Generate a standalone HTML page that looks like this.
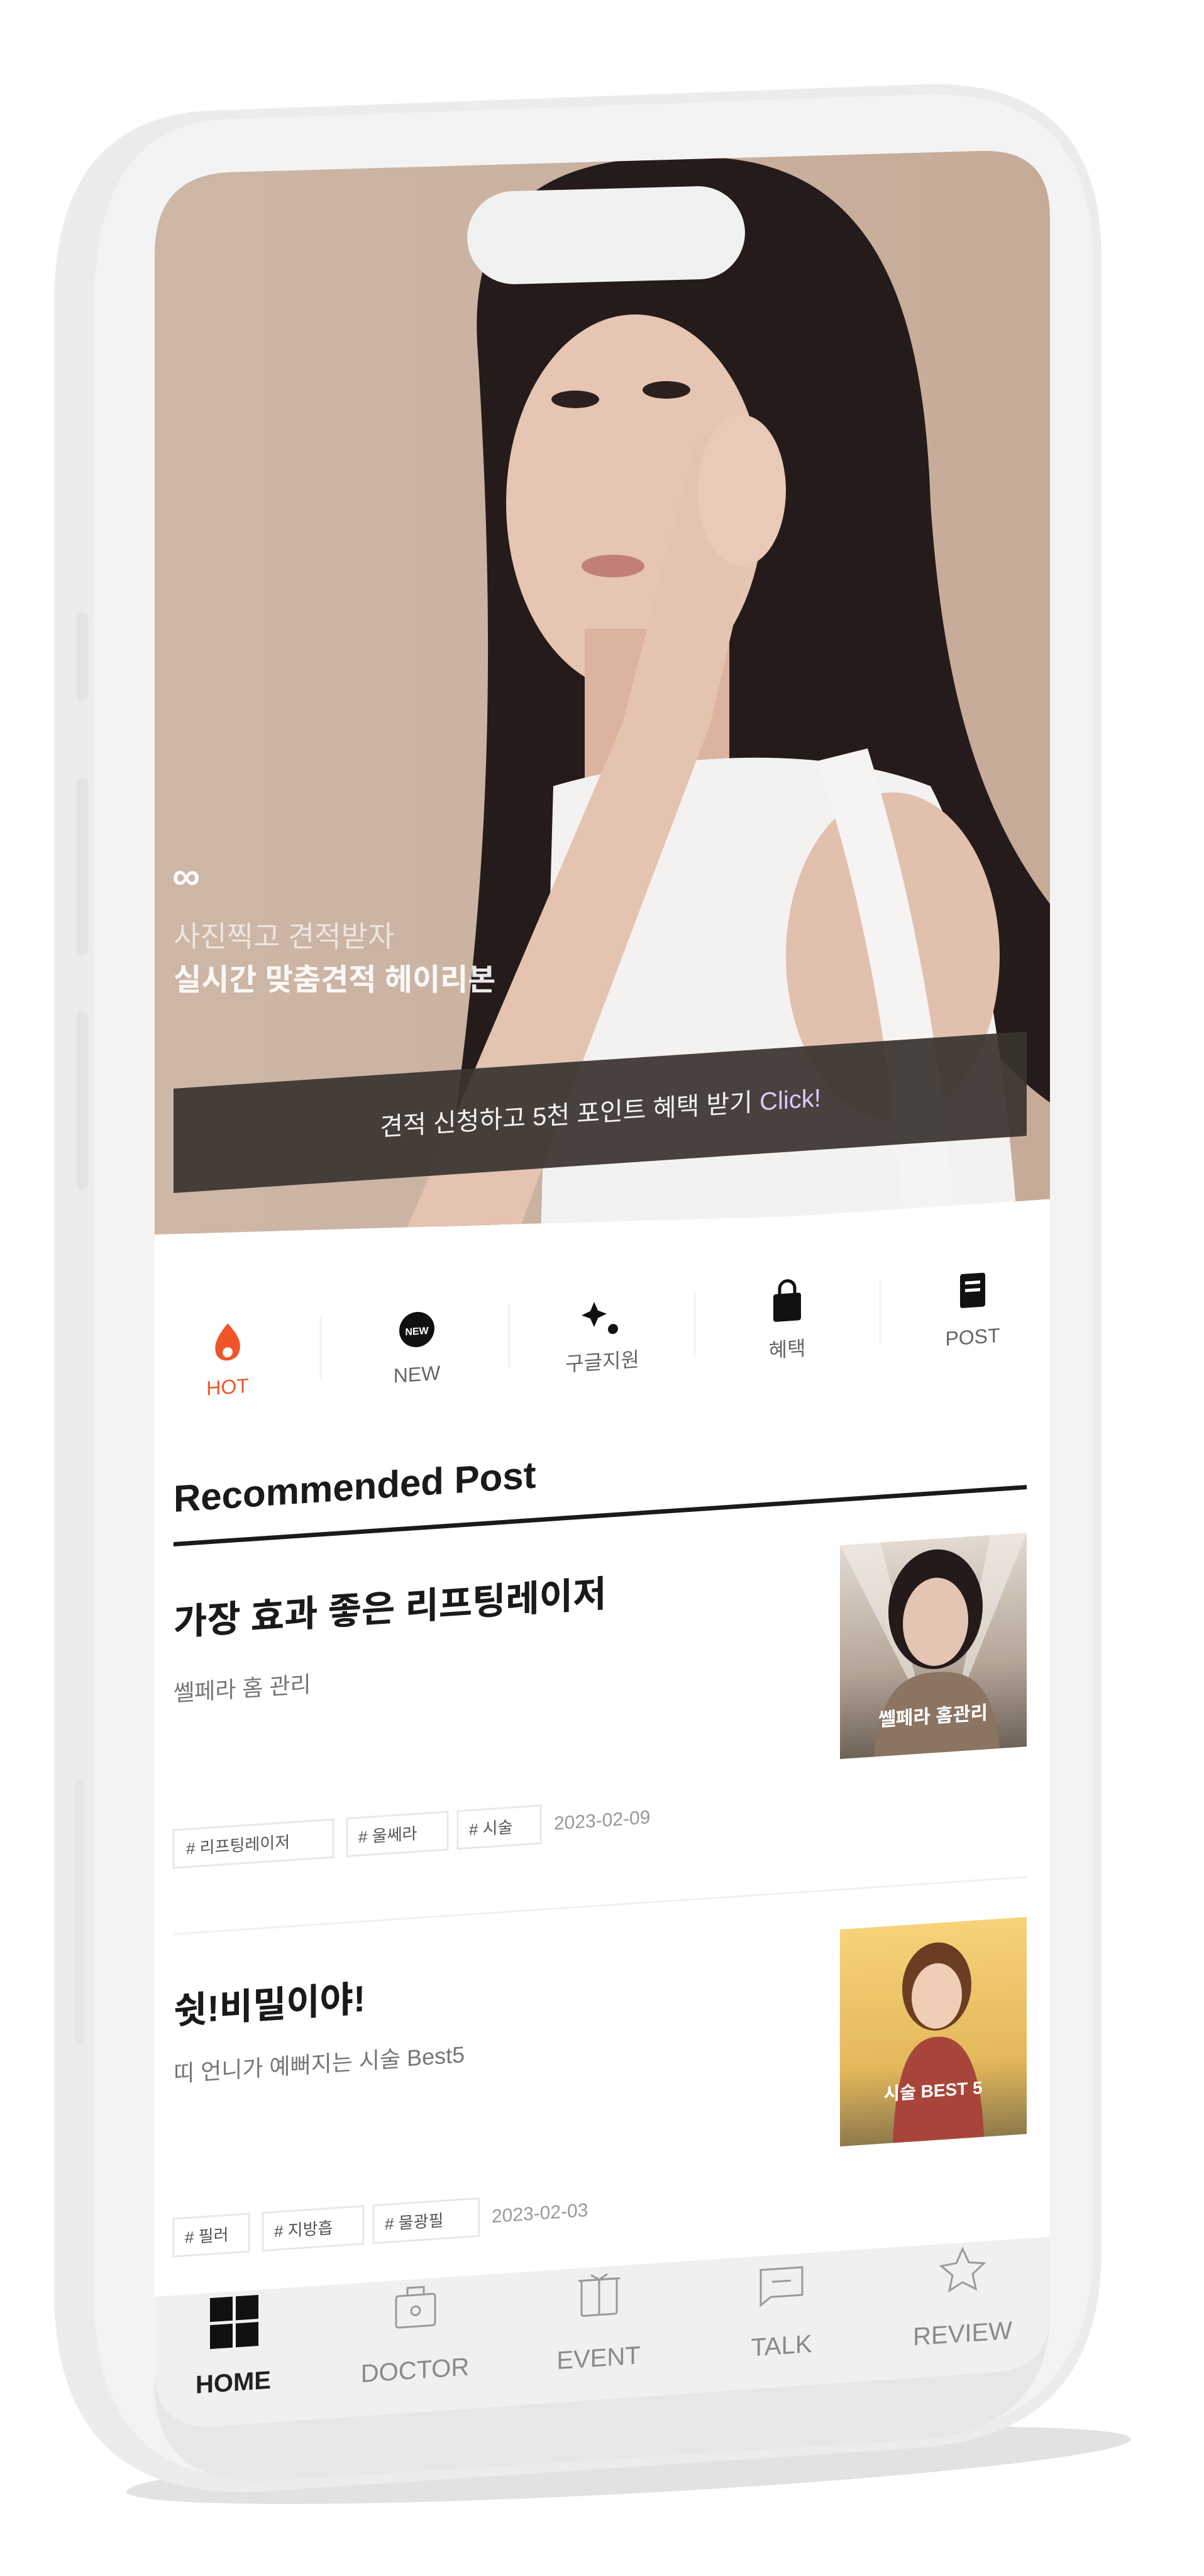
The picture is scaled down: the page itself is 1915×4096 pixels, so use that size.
<!DOCTYPE html>
<html><head><meta charset="utf-8">
<style>
html,body{margin:0;padding:0;background:#fff;}
svg{display:block;}
text{font-family:"Liberation Sans","Noto Sans CJK KR",sans-serif;}
</style></head>
<body>
<svg width="1915" height="4096" viewBox="0 0 1915 4096" xmlns="http://www.w3.org/2000/svg">
<defs>
  <clipPath id="scr">
    <path d="M246 400 Q248 282 360 274 L1560 240 Q1670 236 1670 345 L1670 3680 Q1668 3768 1580 3772 L340 3858 Q248 3862 246 3770 Z"/>
  </clipPath>
  <clipPath id="hero">
    <polygon points="246,150 1700,150 1700,1921 246,1963"/>
  </clipPath>
  <linearGradient id="bg" x1="0" y1="0" x2="1" y2="0">
    <stop offset="0" stop-color="#cdb7a7"/><stop offset="1" stop-color="#c6ab98"/>
  </linearGradient>
  <linearGradient id="t1" x1="0" y1="0" x2="0" y2="1">
    <stop offset="0" stop-color="#e3dad2"/><stop offset="0.6" stop-color="#b4a597"/><stop offset="1" stop-color="#6e6257"/>
  </linearGradient>
  <linearGradient id="t2" x1="0" y1="0" x2="0" y2="1">
    <stop offset="0" stop-color="#f7d27a"/><stop offset="0.65" stop-color="#e3b85a"/><stop offset="1" stop-color="#8f7a4c"/>
  </linearGradient>
</defs>

<ellipse cx="1000" cy="3920" rx="800" ry="45" fill="#e2e2e2" transform="rotate(-3 1000 3920)"/>
<path d="M330 176 L1470 134 Q1752 126 1752 410 L1752 3590 Q1745 3878 1450 3893 L410 3962 Q90 3975 86 3650 L86 480 Q88 190 330 176 Z" fill="#ececec"/>
<path d="M350 190 L1470 150 Q1738 144 1738 410 L1738 3590 Q1730 3860 1450 3875 L420 3940 Q150 3950 150 3650 L150 480 Q152 204 350 190 Z" fill="#f3f3f3"/>
<path d="M246 3600 L1670 3560 L1670 3690 Q1660 3870 1450 3880 L420 3945 Q240 3950 246 3780 Z" fill="#e7e7e7"/>
<rect x="122" y="974" width="18" height="140" rx="8" fill="#e3e3e3"/>
<rect x="122" y="1237" width="18" height="282" rx="8" fill="#e3e3e3"/>
<rect x="122" y="1609" width="18" height="282" rx="8" fill="#e3e3e3"/>
<rect x="118" y="2830" width="16" height="420" rx="8" fill="#e6e6e6"/>

<g clip-path="url(#scr)">
  <rect x="240" y="200" width="1440" height="3700" fill="#fff"/>
  <g clip-path="url(#hero)">
    <rect x="240" y="200" width="1440" height="1800" fill="url(#bg)"/>
    <path d="M760 560 C740 300 900 240 1130 250 C1400 262 1470 500 1480 800 C1500 1100 1560 1300 1680 1450 L1680 1760 C1560 1680 1460 1520 1420 1400 L1000 1400 C900 1520 850 1700 790 1960 L700 1960 C760 1520 800 1200 760 560 Z" fill="#251b1a"/>
    <ellipse cx="1010" cy="800" rx="205" ry="300" fill="#e6c5b3"/>
    <rect x="930" y="1000" width="230" height="260" fill="#dcb39e"/>
    <path d="M880 1250 C1050 1200 1300 1180 1480 1250 C1560 1400 1600 1700 1620 1970 L860 1970 Z" fill="#f4f2f1"/>
    <ellipse cx="1420" cy="1520" rx="170" ry="260" fill="#e2c0ae"/>
    <path d="M1300 1210 L1380 1190 C1460 1450 1500 1700 1520 1970 L1440 1970 C1420 1700 1380 1450 1300 1210 Z" fill="#f6f4f3"/>
    <polygon points="640,1970 820,1970 1130,1150 1230,720 1110,690 990,1150" fill="#e5c3b1"/>
    <ellipse cx="1180" cy="780" rx="70" ry="120" fill="#e9cab8"/>
    <ellipse cx="915" cy="635" rx="38" ry="14" fill="#2b201e"/>
    <ellipse cx="1060" cy="620" rx="38" ry="14" fill="#2b201e"/>
    <ellipse cx="975" cy="900" rx="50" ry="18" fill="#c07f78"/>
    <text x="274" y="1414" font-size="62" font-weight="700" fill="#fff">∞</text>
    <text x="276" y="1505" font-size="46" fill="#fff" fill-opacity="0.65">사진찍고 견적받자</text>
    <text x="276" y="1574" font-size="48" font-weight="700" fill="#fff" fill-opacity="0.9">실시간 맞춤견적 <tspan fill="#fff">헤이리본</tspan></text>
  </g>

  <g transform="matrix(1,-0.067,0,1,0,18.5)">
    <rect x="276" y="1731" width="1357" height="166" fill="#3a342f" fill-opacity="0.93"/>
    <text x="955" y="1828" font-size="40" fill="#f2f2f2" text-anchor="middle">견적 신청하고 5천 포인트 혜택 받기 <tspan fill="#d9c9ff">Click!</tspan></text>
    <rect x="246" y="2000" width="1430" height="1700" fill="#fff"/>

    <path d="M362 2110 C345 2130 338 2145 345 2160 C352 2172 372 2172 379 2160 C386 2145 380 2130 362 2110 Z" fill="#f0552a"/>
    <circle cx="362" cy="2156" r="8" fill="#fff"/>
    <text x="362" y="2222" font-size="32" fill="#f0552a" text-anchor="middle">HOT</text>
    <line x1="510" y1="2110" x2="510" y2="2210" stroke="#f2f2f2" stroke-width="3"/>
    <circle cx="663" cy="2140" r="28" fill="#111"/>
    <text x="663" y="2148" font-size="16" font-weight="700" fill="#fff" text-anchor="middle">NEW</text>
    <text x="663" y="2222" font-size="32" fill="#666" text-anchor="middle">NEW</text>
    <line x1="810" y1="2110" x2="810" y2="2210" stroke="#f2f2f2" stroke-width="3"/>
    <path d="M945 2115 l6 14 14 6 -14 6 -6 14 -6 -14 -14 -6 14 -6 Z" fill="#111"/>
    <circle cx="975" cy="2160" r="8" fill="#111"/>
    <text x="958" y="2222" font-size="32" fill="#666" text-anchor="middle">구글지원</text>
    <line x1="1105" y1="2110" x2="1105" y2="2210" stroke="#f2f2f2" stroke-width="3"/>
    <rect x="1230" y="2122" width="44" height="44" rx="4" fill="#111"/>
    <path d="M1240 2124 v-10 a12 12 0 0 1 24 0 v10" stroke="#111" stroke-width="5" fill="none"/>
    <text x="1252" y="2222" font-size="32" fill="#666" text-anchor="middle">혜택</text>
    <line x1="1400" y1="2110" x2="1400" y2="2210" stroke="#f2f2f2" stroke-width="3"/>
    <rect x="1527" y="2110" width="40" height="54" rx="4" fill="#111"/>
    <rect x="1535" y="2122" width="24" height="5" fill="#fff"/>
    <rect x="1535" y="2134" width="24" height="5" fill="#fff"/>
    <text x="1547" y="2222" font-size="32" fill="#666" text-anchor="middle">POST</text>

    <text x="276" y="2404" font-size="60" font-weight="700" fill="#1a1a1a">Recommended Post</text>
    <rect x="276" y="2452" width="1357" height="7" fill="#1a1a1a"/>

    <text x="276" y="2600" font-size="58" font-weight="700" fill="#1a1a1a">가장 효과 좋은 리프팅레이저</text>
    <text x="276" y="2705" font-size="36" fill="#777">쎌페라 홈 관리</text>
    <rect x="1336" y="2528" width="297" height="340" fill="url(#t1)"/>
    <path d="M1336 2528 L1400 2528 L1470 2800 Z M1633 2528 L1575 2528 L1520 2800 Z" fill="#f3efea" fill-opacity="0.6"/>
    <ellipse cx="1488" cy="2640" rx="75" ry="95" fill="#231a19"/>
    <ellipse cx="1488" cy="2660" rx="52" ry="70" fill="#e4c4b2"/>
    <path d="M1390 2868 C1400 2760 1440 2740 1488 2740 C1540 2740 1580 2760 1590 2868 Z" fill="#8b7462"/>
    <text x="1484" y="2820" font-size="30" font-weight="700" fill="#fff" text-anchor="middle">쎌페라 홈관리</text>

    <g font-size="26" fill="#555">
      <rect x="276" y="2910" width="254" height="60" fill="#fff" stroke="#e8e8e8" stroke-width="3"/>
      <text x="296" y="2950"># 리프팅레이저</text>
      <rect x="552" y="2910" width="160" height="60" fill="#fff" stroke="#e8e8e8" stroke-width="3"/>
      <text x="570" y="2950"># 울쎄라</text>
      <rect x="728" y="2910" width="132" height="60" fill="#fff" stroke="#e8e8e8" stroke-width="3"/>
      <text x="746" y="2950"># 시술</text>
      <text x="881" y="2950" font-size="30" fill="#999">2023-02-09</text>
    </g>
    <rect x="276" y="3074" width="1357" height="3" fill="#f0f0f0"/>

    <text x="276" y="3218" font-size="58" font-weight="700" fill="#1a1a1a">쉿!비밀이야!</text>
    <text x="276" y="3310" font-size="36" fill="#777">띠 언니가 예뻐지는 시술 Best5</text>
    <rect x="1336" y="3139" width="297" height="345" fill="url(#t2)"/>
    <ellipse cx="1490" cy="3240" rx="55" ry="70" fill="#6b3d22"/>
    <ellipse cx="1490" cy="3255" rx="40" ry="52" fill="#f0cdb5"/>
    <path d="M1420 3484 C1425 3360 1450 3320 1490 3320 C1530 3320 1560 3360 1565 3484 Z" fill="#a8453a"/>
    <text x="1484" y="3415" font-size="28" font-weight="700" fill="#fff" text-anchor="middle">시술 BEST 5</text>

    <g font-size="26" fill="#555">
      <rect x="276" y="3528" width="120" height="60" fill="#fff" stroke="#e8e8e8" stroke-width="3"/>
      <text x="294" y="3568"># 필러</text>
      <rect x="418" y="3528" width="160" height="60" fill="#fff" stroke="#e8e8e8" stroke-width="3"/>
      <text x="436" y="3568"># 지방흡</text>
      <rect x="594" y="3528" width="168" height="60" fill="#fff" stroke="#e8e8e8" stroke-width="3"/>
      <text x="612" y="3568"># 물광필</text>
      <text x="782" y="3568" font-size="30" fill="#999">2023-02-03</text>
    </g>

    <rect x="240" y="3650" width="1440" height="300" fill="#f0f0f0"/>
    <rect x="334" y="3658" width="36" height="38" fill="#111"/>
    <rect x="375" y="3658" width="36" height="38" fill="#111"/>
    <rect x="334" y="3701" width="36" height="38" fill="#111"/>
    <rect x="375" y="3701" width="36" height="38" fill="#111"/>
    <text x="371" y="3808" font-size="40" font-weight="700" fill="#222" text-anchor="middle">HOME</text>

    <g fill="none" stroke="#9a9a9a" stroke-width="3">
      <rect x="630" y="3675" width="62" height="50" rx="4"/>
      <path d="M648 3675 v-12 h26 v12"/>
      <circle cx="661" cy="3700" r="7"/>
      <rect x="925" y="3670" width="56" height="56" rx="3"/>
      <path d="M920 3670 h66 M953 3670 v56 M940 3662 l13 8 13 -8"/>
      <path d="M1210 3672 h66 v44 h-50 l-16 12 Z"/>
      <path d="M1228 3692 h30"/>
      <path d="M1531 3660 l10 22 24 3 -18 16 5 24 -21 -12 -21 12 5 -24 -18 -16 24 -3 Z"/>
    </g>
    <text x="660" y="3808" font-size="40" fill="#8a8a8a" text-anchor="middle">DOCTOR</text>
    <text x="952" y="3808" font-size="40" fill="#8a8a8a" text-anchor="middle">EVENT</text>
    <text x="1243" y="3808" font-size="40" fill="#8a8a8a" text-anchor="middle">TALK</text>
    <text x="1531" y="3808" font-size="40" fill="#8a8a8a" text-anchor="middle">REVIEW</text>
  </g>
</g>

<rect x="743" y="300" width="442" height="148" rx="74" fill="#f1f1f1" transform="rotate(-1.5 964 374)"/>
</svg>
</body></html>
